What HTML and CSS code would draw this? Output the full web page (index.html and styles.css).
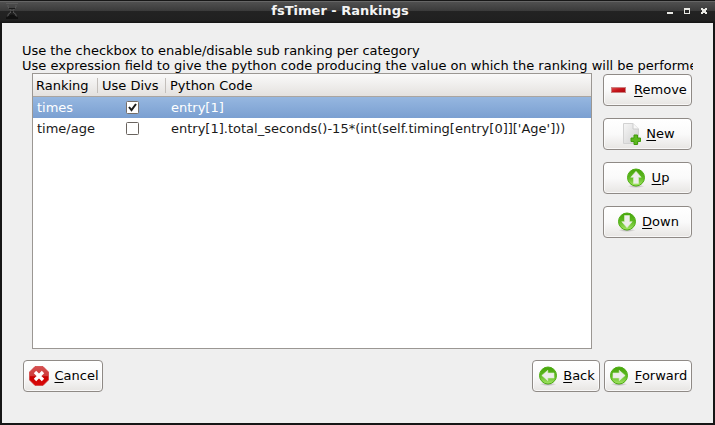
FILE: index.html
```html
<!DOCTYPE html>
<html lang="en">
<head>
<meta charset="utf-8">
<title>fsTimer - Rankings</title>
<link rel="stylesheet" href="styles.css">
</head>
<body>
<svg class="defs" width="0" height="0">
  <defs>
    <linearGradient id="green" x1="0" y1="0" x2="0" y2="1"><stop offset="0" stop-color="#45a30a"/><stop offset=".5" stop-color="#5fba22"/><stop offset="1" stop-color="#a4e566"/></linearGradient>
    <linearGradient id="red" x1="0" y1="0" x2="0" y2="1"><stop offset="0" stop-color="#d45050"/><stop offset=".48" stop-color="#cf3c3c"/><stop offset=".54" stop-color="#c80000"/><stop offset="1" stop-color="#dc0808"/></linearGradient>
    <linearGradient id="bar" x1="0" y1="0" x2="1" y2="1"><stop offset="0" stop-color="#e05050"/><stop offset=".5" stop-color="#c41218"/><stop offset="1" stop-color="#a80810"/></linearGradient>
    <linearGradient id="paper" x1="0" y1="0" x2="1" y2="1"><stop offset="0" stop-color="#f6f6f6"/><stop offset="1" stop-color="#d0d0d0"/></linearGradient>
    <radialGradient id="shade"><stop offset="0" stop-color="#777" stop-opacity=".6"/><stop offset="1" stop-color="#777" stop-opacity="0"/></radialGradient>
    <g id="disc">
      <ellipse cx="10" cy="18.3" rx="8.5" ry="1.7" fill="url(#shade)"/>
      <circle cx="10" cy="9.5" r="8.5" fill="url(#green)" stroke="#4fae14"/>
    </g>
    <path id="arrow" d="M10 3.300 15.200 9.300H12.500V15.500H7.500V9.300H4.800Z" fill="#ededeb" stroke="#dcefcb" stroke-width=".6"/>
  </defs>
</svg>
<div class="window">
  <header class="titlebar">
    <svg class="app-icon" width="14" height="18" viewBox="0 0 14 18"><path d="M1 1.5H13M3 3V5L6 8.5V10L3 12.5V15M11 3V5L8 8.5V10L11 12.5V15" fill="none" stroke="#5c5c5c"/><path d="M4 6.500H10M6 9.500H8" stroke="#1c1c1c"/><path d="M1 17V15.5L6 12.5H8L13 15.5V17Z" fill="#101010"/></svg>
    <h1>fsTimer - Rankings</h1>
    <svg class="controls" width="44" height="8" viewBox="0 0 44 8" shape-rendering="crispEdges" fill="#e8e8e4"><path d="M0 5h6v2H0ZM17 1h6v6h-6ZM34 1h2v1h2v-1h2v2h-1v2h1v2h-2v-1h-2v1h-2v-2h1v-2h-1Z"/><path d="M18 3h4v3h-4Z" fill="#292929"/></svg>
  </header>
  <main>
    <p class="hint"><span class="lead">Use the checkbox to enable/disable sub ranking per category</span><br>Use expression field to give the python code producing the value on which the ranking will be performed</p>
    <div class="workspace">
      <div class="table">
        <div class="row head"><span>Ranking</span><span>Use Divs</span><span>Python Code</span></div>
        <div class="row selected"><span>times</span><span class="check"><svg width="13" height="13" viewBox="0 0 13 13"><rect x=".5" y=".5" width="12" height="12" rx="1" fill="#fff" stroke="#756e68"/><path d="M3 6 5.5 9.2 10 3" fill="none" stroke="#1b1b1b" stroke-width="2"/></svg></span><span>entry[1]</span></div>
        <div class="row"><span>time/age</span><span class="check"><svg width="13" height="13" viewBox="0 0 13 13"><rect x=".5" y=".5" width="12" height="12" rx="1" fill="#fff" stroke="#69635e"/></svg></span><span>entry[1].total_seconds()-15*(int(self.timing[entry[0]]['Age']))</span></div>
      </div>
      <div class="side">
        <button><svg width="20" height="20" viewBox="0 0 20 20"><rect x="2.5" y="7.5" width="14" height="5" fill="url(#bar)" stroke="#cb8080"/></svg><span><u>R</u>emove</span></button>
        <button><svg width="20" height="22" viewBox="0 0 20 22"><path d="M2.5 .5H12L17.500 6V20.500H2.500Z" fill="url(#paper)" stroke="#d2d2d2"/><path d="M12 .5V6H17.500" fill="#f8f8f8" stroke="#ccc"/><path d="M13 12H16.500V15H19.500V18.500H16.500V21.500H13V18.500H10V15H13Z" fill="#5cb81e" stroke="#419a0b"/></svg><span><u>N</u>ew</span></button>
        <button><svg width="20" height="20" viewBox="0 0 20 20"><use href="#disc"/><use href="#arrow"/></svg><span><u>U</u>p</span></button>
        <button><svg width="20" height="20" viewBox="0 0 20 20"><use href="#disc"/><use href="#arrow" transform="rotate(180 10 9.5)"/></svg><span><u>D</u>own</span></button>
      </div>
    </div>
    <footer>
      <button class="cancel"><svg width="20" height="20" viewBox="0 0 20 20"><path d="M6 .5H14L19.500 6V14L14 19.500H6L.5 14V6Z" fill="url(#red)" stroke="#cf3838" stroke-width=".7"/><path d="M6 6 14 14M14 6 6 14" stroke="#fff" stroke-width="3.400"/></svg><span><u>C</u>ancel</span></button>
      <button class="back"><svg width="20" height="20" viewBox="0 0 20 20"><use href="#disc"/><use href="#arrow" transform="rotate(-90 10 9.5)"/></svg><span><u>B</u>ack</span></button>
      <button class="forward"><svg width="20" height="20" viewBox="0 0 20 20"><use href="#disc"/><use href="#arrow" transform="rotate(90 10 9.5)"/></svg><span><u>F</u>orward</span></button>
    </footer>
  </main>
</div>
</body>
</html>
```
FILE: styles.css
```css
* { box-sizing: border-box; }
body { margin: 0; font: 13px/15px "DejaVu Sans", sans-serif; color: #000; overflow: hidden; }
.defs { display: block; height: 0; }
.window { width: 715px; height: 425px; background: #161616; }
.titlebar { height: 23px; padding: 0 8px 0 5px; display: grid; grid-template-columns: 14px 1fr 44px; align-items: center; border-top: 1px solid #171717; border-bottom: 1px solid #161616; background: linear-gradient(#666 0 1px, #505050 1px, #3a3a3a 10px, #232323 10px, #202020 20px, #171717); }
.app-icon { margin-top: -1px; }
h1 { margin: -2px 0 0; padding-right: 2px; font-size: 13px; line-height: 20px; text-align: center; color: #f4f4f4; }
.titlebar .controls { margin: -1px 0 0 4px; }
main { margin: 0 2px; height: 400px; padding: 20px 20px 0 20px; background: #efefef; }
.hint { margin: 0; height: 30px; overflow: hidden; white-space: nowrap; }
.lead { letter-spacing: -.035px; }
.workspace { display: flex; gap: 11px; margin-left: 10px; }
.table { width: 560px; height: 276px; border: 1px solid #9b9793; background: #fff; }
.row { display: grid; grid-template-columns: 65px 68px 1fr; height: 21px; align-items: center; color: #1a1a1a; white-space: nowrap; }
.row span { padding-left: 4px; }
.row span:last-child { padding-left: 5px; }
.head { height: 23px; grid-template-columns: 64px 68px 1fr; color: #000; background: linear-gradient(#fafafa, #e4e1de); border-bottom: 1px solid #aaa5a0; }
.head span { height: 15px; padding-left: 3px; }
.head span + span { padding-left: 4px; border-left: 1px solid #c3bfbb; }
.head span:last-child { padding-left: 4px; }
.selected { color: #fff; background: linear-gradient(#96b7e0, #7a9fd1); }
.row .check { display: flex; padding-left: 28px; }
.side { width: 89px; padding-top: 1px; display: flex; flex-direction: column; gap: 12px; }
button { height: 32px; padding: 0; display: flex; align-items: center; justify-content: center; gap: 5px; border: 1px solid #8f8a86; border-radius: 4px; background: linear-gradient(#fff, #fafafa 50%, #e7e5e3); box-shadow: inset 0 0 0 1px #ffffffb0; font: inherit; color: #000; }
button span { margin: -1px -.5px 0 .5px; }
u { text-underline-offset: 2px; text-decoration-thickness: 1px; text-decoration-skip-ink: none; }
footer { display: flex; margin: 11px 1px 0; }
.cancel { width: 80px; margin-right: auto; padding-left: 1px; }
.back { width: 68px; margin-right: 4px; }
.forward { width: 88px; }
```
